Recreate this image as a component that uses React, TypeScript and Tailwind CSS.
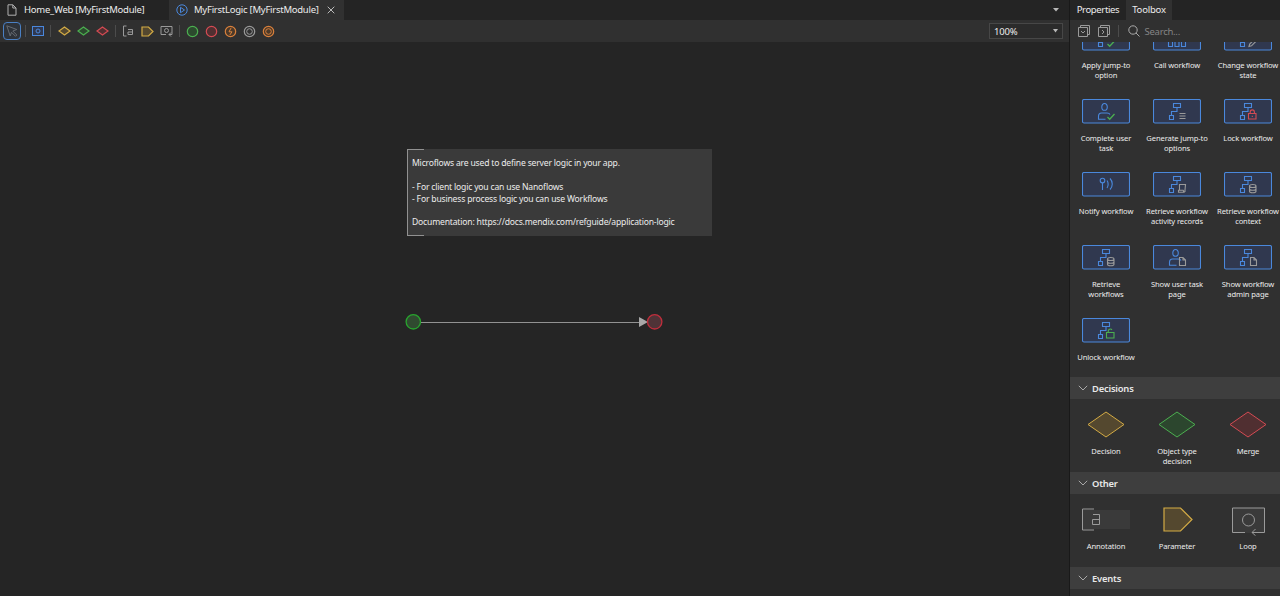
import React from "react";

const BLUE = "#4a88dc";
const GRAY = "#9a9a9a";
const GREEN = "#4caf50";
const RED = "#d44b53";
const YELLOW = "#d3ab45";
const ORANGE = "#d9803c";

type Extra = "list" | "lock" | "scroll" | "db" | "page" | "unlock" | "check" | "pencil";
type Base = "flow" | "user" | "notify" | "boxes";

function ExtraMark({ kind }: { kind: Extra }) {
  switch (kind) {
    case "list":
      return <path d="M26.5 14.5h6M26.5 17h6M26.5 19.5h6" stroke={GRAY} />;
    case "lock":
      return <path d="M24.5 14.5h7.5v5.5h-7.5zM26.2 14.5v-1.5a2.1 2.1 0 0 1 4.2 0v1.5M28.3 16.8v1.2" stroke={RED} />;
    case "unlock":
      return <path d="M24.5 14.5h7.5v5.5h-7.5zM26.2 14.5v-1a2.1 2.1 0 0 1 3.8-1.5" stroke={GREEN} />;
    case "scroll":
      return <path d="M26.5 12.5h6l-.5 5.5v1.5l-1 .8h-5.500v-2h1zM30.5 18.3v2M26.500 18.300h4" stroke={GRAY} />;
    case "db":
      return (
        <path
          d="M25.5 14c0-2 6.5-2 6.5 0s-6.5 2-6.5 0v5.2c0 2 6.5 2 6.5 0V14M25.5 16.7c0 2 6.5 2 6.5 0"
          stroke={GRAY}
        />
      );
    case "page":
      return <path d="M26.5 12.5h3.5l2.5 2.5v5.500h-6zM30 12.500V15h2.500" stroke={GRAY} />;
    case "check":
      return <path d="M25.500 18l2.200 2.300 4.800-5.300" stroke={GREEN} strokeWidth="1.300" />;
    case "pencil":
      return <path d="M25 20.500l.7-2.500 5-5 1.800 1.800-5 5z" stroke={GRAY} />;
  }
}

function ActivityIcon({ base, extra }: { base: Base; extra?: Extra }) {
  return (
    <svg width="48" height="25" viewBox="0 0 48 25" fill="none" strokeWidth="1.1">
      <rect x="0.5" y="0.5" width="47" height="23.5" rx="1.5" fill="#30384f" stroke={BLUE} />
      <g stroke={BLUE}>
        {base === "flow" && (
          <path d="M20.5 4.5h7v4h-7zM24 8.500v4h-5.500v4M16.500 16.500h4v4h-4z" />
        )}
        {base === "user" && (
          <path d="M22.500 4.500c3.800 0 3.600 6.800 0 6.800s-3.600-6.800 0-6.800zM23.500 20.200h-7v-2.700c0-2.500 1.200-3.500 3-3.500h5.500c1.500 0 2.500.4 3 1.500" />
        )}
        {base === "notify" && (
          <path d="M20.500 6.300a2.300 2.300 0 1 1 0 4.600a2.300 2.300 0 1 1 0-4.600M20.500 11v7M25 8.500c1.500 2 1.500 5.500 0 7.500M28 6.500c3 3 3 8 0 11" />
        )}
        {base === "boxes" && <path d="M15.500 15.500h4v5h-4zM22 15.500h4v5h-4zM28.500 15.500h4v5h-4z" />}
      </g>
      {extra && <ExtraMark kind={extra} />}
    </svg>
  );
}

function Tile({ icon, lines }: { icon: React.ReactNode; lines: string[] }) {
  return (
    <div className="flex h-[73px] flex-col items-center">
      <div className="flex h-[25px] shrink-0 items-center justify-center">{icon}</div>
      <div className="mt-[10px] pl-px text-center text-[7.6px] leading-[9.5px] tracking-[-0.12px] whitespace-nowrap text-[#ececec]">
        {lines.map((line) => (
          <div key={line}>{line}</div>
        ))}
      </div>
    </div>
  );
}

function SectionHeader({ title }: { title: string }) {
  return (
    <div className="flex h-[22px] shrink-0 items-center bg-[#3e3e3e] pl-2 text-[9.4px] font-semibold tracking-[-0.2px] text-[#e8e8e8]">
      <svg width="10" height="6" viewBox="0 0 10 6" fill="none" stroke="#aaa">
        <path d="M.8.8L5 5 9.200.8" />
      </svg>
      <span className="ml-1 pt-[2px]">{title}</span>
    </div>
  );
}

function DiamondTile({ stroke, fill }: { stroke: string; fill: string }) {
  return (
    <svg width="38" height="27" viewBox="0 0 38 27">
      <path d="M1 13.500L19 1l18 12.500L19 26z" fill={fill} stroke={stroke} />
    </svg>
  );
}

const activities: { base: Base; extra?: Extra; lines: string[] }[] = [
  { base: "flow", extra: "check", lines: ["Apply jump-to", "option"] },
  { base: "boxes", lines: ["Call workflow"] },
  { base: "flow", extra: "pencil", lines: ["Change workflow", "state"] },
  { base: "user", extra: "check", lines: ["Complete user", "task"] },
  { base: "flow", extra: "list", lines: ["Generate jump-to", "options"] },
  { base: "flow", extra: "lock", lines: ["Lock workflow"] },
  { base: "notify", lines: ["Notify workflow"] },
  { base: "flow", extra: "scroll", lines: ["Retrieve workflow", "activity records"] },
  { base: "flow", extra: "db", lines: ["Retrieve workflow", "context"] },
  { base: "flow", extra: "db", lines: ["Retrieve", "workflows"] },
  { base: "user", extra: "page", lines: ["Show user task", "page"] },
  { base: "flow", extra: "page", lines: ["Show workflow", "admin page"] },
  { base: "flow", extra: "unlock", lines: ["Unlock workflow"] },
];

function Separator() {
  return <div className="h-3 w-px shrink-0 bg-[#4c4c4c]" />;
}

function SmallDiamond({ stroke, fill }: { stroke: string; fill: string }) {
  return (
    <svg width="13" height="10" viewBox="0 0 13 10">
      <path d="M1 5l5.500-4L12 5 6.500 9z" fill={fill} stroke={stroke} strokeWidth="1.2" />
    </svg>
  );
}

function SmallCircle({ stroke, fill, children }: { stroke: string; fill: string; children?: React.ReactNode }) {
  return (
    <svg width="13" height="13" viewBox="0 0 13 13">
      <circle cx="6.500" cy="6.500" r="5.200" fill={fill} stroke={stroke} strokeWidth="1.200" />
      {children}
    </svg>
  );
}

function EditorTabs() {
  return (
    <div className="flex h-5 shrink-0 bg-[#242424] text-[9.5px] tracking-[-0.25px] text-[#ececec]">
      <div className="flex w-[169px] items-center pl-[7px]">
        <svg width="10" height="12" viewBox="0 0 10 12" fill="none" stroke="#b0b0b0">
          <path d="M1 .8h4.800L9 4v7.200H1zM5.800.8V4H9" />
        </svg>
        <span className="ml-[7px] whitespace-nowrap">Home_Web [MyFirstModule]</span>
      </div>
      <div className="flex w-[175px] items-center bg-[#313131] pl-[7px]">
        <svg className="shrink-0" width="12" height="12" viewBox="0 0 12 12" fill="none" stroke={BLUE}>
          <circle cx="6" cy="6" r="5.200" />
          <path d="M4.500 3.300v5.400L8.500 6z" />
        </svg>
        <span className="ml-[6px] w-[125px] shrink-0 whitespace-nowrap">MyFirstLogic [MyFirstModule]</span>
        <svg className="ml-[8px] shrink-0" width="8" height="8" viewBox="0 0 8 8" stroke="#bbb">
          <path d="M.7.7l6.600 6.600M7.300.7L.7 7.300" />
        </svg>
      </div>
      <div className="flex grow items-center justify-end pr-[10px]">
        <svg width="6" height="4" viewBox="0 0 6 4" fill="#b8b8b8">
          <path d="M0 0h6L3 3.500z" />
        </svg>
      </div>
    </div>
  );
}

function EditorToolbar() {
  return (
    <div className="flex h-[22px] shrink-0 items-center bg-[#303030] pr-[6px] pl-[3px]">
      <div className="flex size-[18px] items-center justify-center rounded-[4px] border border-[#4a80c4] bg-[#2e333a]">
        <svg width="12" height="12" viewBox="0 0 12 12" fill="none" stroke="#666b72">
          <path d="M.8.800l10 3.700-4 1.500 4 4-1.300 1.300-4-4-1.300 3.700z" />
        </svg>
      </div>
      <div className="ml-[4px] flex"><Separator /></div>
      <svg className="ml-[6px]" width="12" height="10" viewBox="0 0 12 10" fill="none" stroke={BLUE}>
        <rect x=".5" y=".5" width="11" height="9" fill="#30384f" />
        <circle cx="6" cy="5" r="2" />
      </svg>
      <div className="ml-[6px] flex"><Separator /></div>
      <div className="ml-[6.500px] flex gap-[6px]">
        <SmallDiamond stroke={YELLOW} fill="#54482f" />
        <SmallDiamond stroke={GREEN} fill="#2c4a2e" />
        <SmallDiamond stroke={RED} fill="#502f31" />
      </div>
      <div className="ml-[6px] flex"><Separator /></div>
      <svg className="ml-[7.500px]" width="11" height="12" viewBox="0 0 11 12" fill="none" stroke={GRAY}>
        <path d="M3.500 1H.5v10h3M5 4.500h4.500v5H5V7h4.500" />
      </svg>
      <svg className="ml-[6.500px]" width="13" height="11" viewBox="0 0 13 11">
        <path d="M1 1h6.500L12 5.500 7.500 10H1z" fill="#54482f" stroke={YELLOW} strokeWidth="1.200" />
      </svg>
      <svg className="ml-[6px]" width="13" height="12" viewBox="0 0 13 12" fill="none" stroke={GRAY}>
        <path d="M6 9.500H1v-8h11v8H9M11 7.500l-2 2 2 2" />
        <circle cx="6.500" cy="5.500" r="2" />
      </svg>
      <div className="ml-[6px] flex"><Separator /></div>
      <div className="ml-[6px] flex gap-[6px]">
        <SmallCircle stroke={GREEN} fill="#2c4a2e" />
        <SmallCircle stroke={RED} fill="#502f31" />
        <SmallCircle stroke={ORANGE} fill="#4b3929">
          <path d="M7.200 2.800L5 6.800h3L5.800 10" fill="none" stroke={ORANGE} />
        </SmallCircle>
        <SmallCircle stroke={GRAY} fill="none">
          <circle cx="6.500" cy="6.500" r="2.800" fill="none" stroke={GRAY} />
        </SmallCircle>
        <SmallCircle stroke={ORANGE} fill="#4b3929">
          <circle cx="6.500" cy="6.500" r="2.800" fill="none" stroke={ORANGE} />
        </SmallCircle>
      </div>
      <div className="ml-auto flex h-4 w-[74px] items-center justify-between border border-[#474747] bg-[#2b2b2b] pr-[4px] pl-[4px] text-[9.500px] tracking-[-0.2px] text-[#ececec]">
        <span className="pt-[2px]">100%</span>
        <svg width="5" height="4" viewBox="0 0 5 4" fill="#b8b8b8">
          <path d="M0 0h5L2.500 3.500z" />
        </svg>
      </div>
    </div>
  );
}

function Canvas() {
  return (
    <div className="relative grow bg-[#252525]">
      <div className="absolute top-[107px] left-[407px] h-[87px] w-[305px] bg-[#3a3a3a] pt-[7.500px] pl-[5px] text-[8.600px] leading-[12px] tracking-[-0.19px] whitespace-pre text-[#ececec]">
        <div className="absolute top-0 left-0 h-full w-[17px] border-y border-l border-[#919191]" />
        <div>Microflows are used to define server logic in your app.</div>
        <div className="mt-3">- For client logic you can use Nanoflows</div>
        <div>- For business process logic you can use Workflows</div>
        <div className="mt-[11.500px]">Documentation: https://docs.mendix.com/refguide/application-logic</div>
      </div>
      <svg className="absolute top-[271px] left-[404px]" width="260" height="18" viewBox="0 0 260 18">
        <path d="M17 9.500h220" stroke="#929292" />
        <path d="M235 4l9 5-9 5z" fill="#a8a8a8" />
        <circle cx="9.300" cy="8.800" r="7.200" fill="#304a30" stroke="#28a42e" strokeWidth="1.300" />
        <circle cx="250.700" cy="8.800" r="7.200" fill="#4f3337" stroke="#c02e3c" strokeWidth="1.300" />
      </svg>
    </div>
  );
}

function Toolbox() {
  return (
    <aside className="flex w-[210px] shrink-0 flex-col overflow-hidden bg-[#303030]">
      <div className="flex h-5 shrink-0 bg-[#242424] text-[9.500px] tracking-[-0.35px] text-[#ececec]">
        <div className="flex w-[56px] items-center justify-center">Properties</div>
        <div className="flex w-[46px] items-center justify-center bg-[#313131] tracking-[-0.2px]">Toolbox</div>
      </div>
      <div className="flex h-[22px] shrink-0 items-center pl-[8px]">
        <svg width="12" height="12" viewBox="0 0 12 12" fill="none" stroke={GRAY}>
          <path d="M.5 2.500h9v9h-9zM2.500 2.500v-2h9v9h-2M3 6l2 2 2-2" />
        </svg>
        <svg className="ml-[8px]" width="12" height="12" viewBox="0 0 12 12" fill="none" stroke={GRAY}>
          <path d="M.5 2.500h9v9h-9zM2.500 2.500v-2h9v9h-2M4 5l2 2-2 2" />
        </svg>
        <div className="ml-[7.500px] flex"><Separator /></div>
        <svg className="ml-[9px]" width="12" height="12" viewBox="0 0 12 12" fill="none" stroke="#aaa">
          <circle cx="5" cy="5" r="4.200" />
          <path d="M8 8l3.500 3.500" />
        </svg>
        <span className="ml-[5px] pt-[2px] text-[9.500px] tracking-[-0.25px] text-[#858585]">Search...</span>
      </div>
      <div className="flex min-h-0 grow flex-col overflow-hidden">
        <div className="-mt-[16px] grid h-[351px] shrink-0 grid-cols-[71px_71px_71px] content-start">
          {activities.map((a) => (
            <Tile key={a.lines.join(" ")} icon={<ActivityIcon base={a.base} extra={a.extra} />} lines={a.lines} />
          ))}
        </div>
        <SectionHeader title="Decisions" />
        <div className="grid h-[73px] shrink-0 grid-cols-[71px_71px_71px] pt-[13px]">
          <Tile icon={<DiamondTile stroke={YELLOW} fill="#54482f" />} lines={["Decision"]} />
          <Tile icon={<DiamondTile stroke={GREEN} fill="#2c462e" />} lines={["Object type", "decision"]} />
          <Tile icon={<DiamondTile stroke={RED} fill="#502f31" />} lines={["Merge"]} />
        </div>
        <SectionHeader title="Other" />
        <div className="grid h-[73px] shrink-0 grid-cols-[71px_71px_71px] pt-[13px]">
          <Tile
            icon={
              <svg width="48" height="23" viewBox="0 0 48 23" fill="none" stroke={GRAY}>
                <rect x="1" y="2" width="47" height="19" fill="#3a3a3a" stroke="none" />
                <path d="M12 1H.5v21H12M11 6.500h6.500v10h-7v-5h7" />
              </svg>
            }
            lines={["Annotation"]}
          />
          <Tile
            icon={
              <svg className="ml-[2px]" width="30" height="25" viewBox="0 0 30 25">
                <path d="M1 1h16.500L29 12.500 17.500 24H1z" fill="#54482f" stroke={YELLOW} strokeWidth="1.200" />
              </svg>
            }
            lines={["Parameter"]}
          />
          <Tile
            icon={
              <svg className="mt-[3px] ml-px" width="33" height="29" viewBox="0 0 33 29" fill="none" stroke={GRAY}>
                <rect x="1" y="1" width="31" height="25" fill="#3a3a3a" stroke="none" />
                <path d="M13 25.500H.5V1h32v24.500H20M23.500 22L20 25.500l3.500 3.200" />
                <circle cx="16.500" cy="13" r="6" />
              </svg>
            }
            lines={["Loop"]}
          />
        </div>
        <SectionHeader title="Events" />
      </div>
    </aside>
  );
}

export default function App() {
  return (
    <div className="flex h-[596px] w-[1280px] overflow-hidden bg-[#252525] font-['Noto_Sans','Open_Sans',sans-serif]">
      <main className="flex w-[1069px] shrink-0 flex-col">
        <EditorTabs />
        <EditorToolbar />
        <Canvas />
      </main>
      <div className="w-px shrink-0 bg-[#191919]" />
      <Toolbox />
    </div>
  );
}
